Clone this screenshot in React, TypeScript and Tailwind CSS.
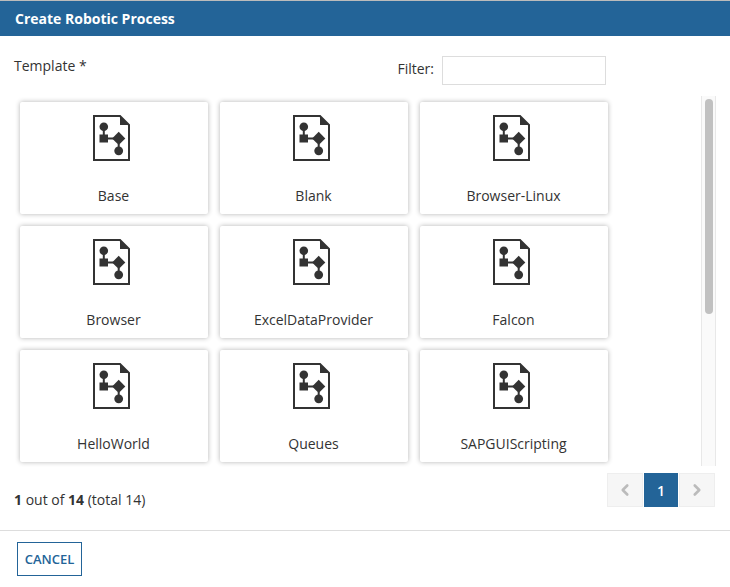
import { ChevronLeft, ChevronRight } from "lucide-react";

const templates = [
  "Base",
  "Blank",
  "Browser-Linux",
  "Browser",
  "ExcelDataProvider",
  "Falcon",
  "HelloWorld",
  "Queues",
  "SAPGUIScripting",
];

function ProcessIcon() {
  return (
    <svg width="37" height="46" viewBox="0 0 37 46" className="block">
      {/* page outline with folded corner */}
      <path d="M1 1H27L36 10V45H1Z" fill="none" stroke="#333" strokeWidth="2" />
      <path d="M27 1L36 10H27Z" fill="#333" />
      <circle cx="10.8" cy="11.8" r="4.3" fill="#333" />
      <path d="M9.8 14H11.8V21H9.8Z" fill="#333" />
      <rect x="6.5" y="19.5" width="8.5" height="8" fill="#333" />
      <path d="M15 22.5H22V24.5H15Z" fill="#333" />
      <path d="M25.7 16.8L32.3 23.4L25.7 30L19.1 23.4Z" fill="#333" />
      <path d="M24.7 29H26.7V33H24.7Z" fill="#333" />
      <circle cx="25.7" cy="35.8" r="4.4" fill="#333" />
    </svg>
  );
}

function TemplateCard({ name }: { name: string }) {
  return (
    <div className="h-[112px] bg-white rounded-[2px] shadow-[0_0_5px_rgba(0,0,0,0.3)] flex flex-col items-center pt-[13px] pr-px">
      <div className="mr-[4px]">
        <ProcessIcon />
      </div>
      <div className="mt-[25px] text-[14px] leading-[20px] text-[#333]">{name}</div>
    </div>
  );
}

export default function App() {
  return (
    <div className="w-[730px] h-[587px] bg-white overflow-hidden font-['Open_Sans',sans-serif] text-[#333]">
      <div className="h-px bg-[#bbb]" />
      {/* Header */}
      <div className="h-[35px] bg-[#236498] flex items-center px-[15px]">
        <h2 className="text-[14px] font-bold text-white leading-none">Create Robotic Process</h2>
      </div>

      {/* Label and filter */}
      <div className="h-[60px] flex items-start pl-[14px] pr-[124px] pt-[20px]">
        <label className="text-[14px] font-medium leading-[20px]">Template *</label>
        <div className="ml-auto flex items-start gap-[8px]">
          <span className="text-[14px] leading-[20px] pt-[3px]">Filter:</span>
          <input className="w-[164px] h-[29px] border border-[#ddd] bg-white outline-none" />
        </div>
      </div>

      {/* Template grid */}
      <div className="flex items-start pl-[20px] pr-[14px]">
        <div className="pt-[6px] grid grid-cols-3 gap-[12px] w-[588px]">
          {templates.map((t) => (
            <TemplateCard key={t} name={t} />
          ))}
        </div>
        <div className="ml-auto w-[15px] h-[370px] bg-[#fafafa] border-x border-[#e8e8e8] pt-[3px] flex justify-center">
          <div className="w-[8px] h-[215px] rounded-full bg-[#c1c1c1]" />
        </div>
      </div>

      {/* Pagination */}
      <div className="flex items-start justify-between pl-[14px] pr-[15px] pt-[7px] h-[64px]">
        <div className="text-[14px] leading-[20px] pt-[17px]">
          <b>1</b> out of <b>14</b> (total 14)
        </div>
        <div className="flex gap-px">
          <div className="w-[36px] h-[34px] bg-[#f6f6f6] border border-[#eee] flex items-center justify-center text-[#bbb]">
            <ChevronLeft size={18} strokeWidth={3.5} />
          </div>
          <div className="w-[34px] h-[34px] bg-[#236498] text-white text-[14px] font-semibold flex items-center justify-center">1</div>
          <div className="w-[36px] h-[34px] bg-[#f6f6f6] border border-[#eee] flex items-center justify-center text-[#bbb]">
            <ChevronRight size={18} strokeWidth={3.5} />
          </div>
        </div>
      </div>

      {/* Footer */}
      <div className="border-t border-[#ddd] pt-[11px] pl-[17px]">
        <button className="w-[65px] h-[34px] border border-[#236498] text-[#236498] text-[13px] font-semibold flex items-center justify-center pt-px">
          CANCEL
        </button>
      </div>
    </div>
  );
}
